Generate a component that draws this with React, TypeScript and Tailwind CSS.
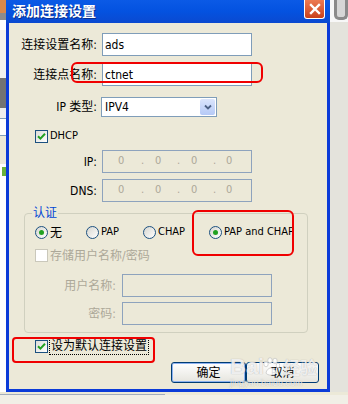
import React from 'react';

const UI = "font-['DejaVu_Sans_Condensed','Liberation_Sans','Noto_Sans_CJK_SC',sans-serif]";

function Check({ checked, disabled }: { checked?: boolean; disabled?: boolean }) {
  return (
    <span
      className={
        disabled
          ? 'flex h-[13px] w-[13px] shrink-0 items-center justify-center border border-[#cac8bb] bg-white'
          : 'flex h-[13px] w-[13px] shrink-0 items-center justify-center border border-[#1c5180] bg-linear-to-br from-[#dcdcd7] to-white'
      }
    >
      {checked && (
        <svg width="9" height="9" viewBox="0 0 9 9">
          <path d="M1 4.2 L3.4 6.6 L8 1.8" stroke="#21a121" strokeWidth="2" fill="none" />
        </svg>
      )}
    </span>
  );
}

function Radio({ checked }: { checked?: boolean }) {
  return (
    <span className="flex h-[13px] w-[13px] shrink-0 items-center justify-center rounded-full border border-[#1c5180] bg-linear-to-br from-[#d6d6d0] to-white">
      {checked && <span className="h-[5px] w-[5px] rounded-full bg-[#21a121]" />}
    </span>
  );
}

function Field({ value, disabled, ip }: { value?: string; disabled?: boolean; ip?: boolean }) {
  return (
    <div
      className={
        disabled
          ? 'flex h-[23px] w-[150px] items-center border border-[#8ea3bd] bg-[#ece9d8]'
          : 'flex h-[23px] w-[150px] items-center border border-[#7f9db9] bg-white pl-[2px]'
      }
    >
      {value && <span className="text-[12px] text-black">{value}</span>}
      {ip && (
        <div className="flex items-center text-[11px] text-[#aca899]">
          <span className="ml-[15px] w-[6px] text-center">0</span>
          <span className="ml-[17px] w-[3px] text-center">.</span>
          <span className="ml-[11px] w-[6px] text-center">0</span>
          <span className="ml-[16px] w-[3px] text-center">.</span>
          <span className="ml-[11px] w-[6px] text-center">0</span>
          <span className="ml-[16px] w-[3px] text-center">.</span>
          <span className="ml-[10px] w-[6px] text-center">0</span>
        </div>
      )}
    </div>
  );
}

function Row({ label, children, mt }: { label: string; children: React.ReactNode; mt: string }) {
  return (
    <div className={`flex h-[23px] items-center ${mt}`}>
      <span className="w-[88px] text-right text-[12px] text-black">{label}</span>
      <div className="ml-[5px]">{children}</div>
    </div>
  );
}

function XpButton({ label, primary, w }: { label: string; primary?: boolean; w: string }) {
  return (
    <div
      className={`flex h-[21px] ${w} items-center justify-center rounded-[3px] border border-[#003c74] bg-linear-to-b from-white to-[#e6e5de] text-[12px] text-black ${
        primary ? 'shadow-[inset_0_0_0_1px_#8db2f0]' : ''
      }`}
    >
      {label}
    </div>
  );
}

export default function App() {
  return (
    <div className={`relative h-[404px] w-[348px] overflow-hidden bg-[#ece9d8] ${UI}`}>
      <div className="flex h-[392px]">
        {/* background app, left */}
        <div className="flex w-[6px] flex-col">
          <div className="h-[13px] bg-[#d9894a]" />
          <div className="h-[7px] bg-[#8c8c8c]" />
          <div className="h-[10px] bg-white" />
          <div className="h-[48px] bg-[#f3f2ee]" />
          <div className="h-[30px] bg-[#737373]" />
          <div className="h-[10px] bg-[#eeeeee]" />
          <div className="h-[18px] border-y border-[#7f9db9] bg-white" />
          <div className="h-[28px] bg-[#ece9d8]" />
          <div className="h-[16px] bg-white">
            <div className="mt-[3px] ml-[2px] h-[9px] w-[4px] bg-[#6bb33a]" />
          </div>
          <div className="flex-1 bg-white" />
        </div>

        {/* dialog */}
        <div className="flex w-[324px] flex-col">
          <div className="flex h-[23px] items-start justify-between bg-linear-to-b from-[#0b5ae6] via-[#0452e0] to-[#0a49d0] pl-[6px] pr-[5px]">
            <span className="font-['Noto_Sans_CJK_SC',sans-serif] text-[14px] leading-[20px] font-bold text-white [text-shadow:1px_1px_0_#0a2d8a]">
              添加连接设置
            </span>
            <div className="flex h-[19px] w-[21px] items-center justify-center rounded-b-[3px] border border-t-0 border-white bg-linear-to-b from-[#ec7a52] to-[#c9401a]">
              <svg width="12" height="12" viewBox="0 0 12 12">
                <path d="M2 2 L10 10 M10 2 L2 10" stroke="white" strokeWidth="2.4" strokeLinecap="square" />
              </svg>
            </div>
          </div>

          <div className="flex flex-1 flex-col border-x-[3px] border-b-[3px] border-[#0b3bd8] bg-[#ece9d8]">
            <Row label="连接设置名称:" mt="mt-[10px]">
              <Field value="ads" />
            </Row>
            <Row label="连接点名称:" mt="mt-[7px]">
              <Field value="ctnet" />
            </Row>

            <div className="mt-[11px] flex h-[20px] items-center">
              <span className="w-[88px] text-right text-[12px] text-black">IP 类型:</span>
              <div className="ml-[4px] flex h-[20px] w-[116px] items-center justify-between border border-[#7f9db9] bg-white pl-[3px] pr-[1px]">
                <span className="text-[12px]">IPV4</span>
                <div className="flex h-[16px] w-[15px] items-center justify-center rounded-[2px] bg-linear-to-b from-[#dbe5fc] to-[#b5c9f6]">
                  <svg width="8" height="6" viewBox="0 0 8 6">
                    <path d="M1 1.5 L4 4.5 L7 1.5" stroke="#4d6185" strokeWidth="1.8" fill="none" />
                  </svg>
                </div>
              </div>
            </div>

            <div className="mt-[13px] ml-[26px] flex h-[13px] items-center">
              <Check checked />
              <span className="ml-[2px] text-[11px] text-black">DHCP</span>
            </div>

            <Row label="IP:" mt="mt-[7px]">
              <Field disabled ip />
            </Row>
            <Row label="DNS:" mt="mt-[6px]">
              <Field disabled ip />
            </Row>

            {/* 认证 group */}
            <div className="mt-[11px] ml-[15px] flex h-[120px] w-[284px] flex-col rounded-[4px] border border-[#d0d0bf]">
              <span className="-mt-[8px] ml-[7px] self-start bg-[#ece9d8] px-[1px] text-[12px] leading-[14px] text-[#0046d5]">认证</span>
              <div className="mt-[6px] flex h-[13px] items-center pl-[10px]">
                <div className="flex w-[51px] items-center">
                  <Radio checked />
                  <span className="ml-[2px] text-[12px]">无</span>
                </div>
                <div className="flex w-[57px] items-center">
                  <Radio />
                  <span className="ml-[2px] text-[11px]">PAP</span>
                </div>
                <div className="flex w-[66px] items-center">
                  <Radio />
                  <span className="ml-[2px] text-[11px]">CHAP</span>
                </div>
                <div className="flex items-center">
                  <Radio checked />
                  <span className="ml-[2px] text-[11px] whitespace-nowrap">PAP and CHAP</span>
                </div>
              </div>
              <div className="mt-[10px] flex h-[13px] items-center pl-[10px]">
                <Check disabled />
                <span className="ml-[2px] text-[12px] text-[#aca899]">存储用户名称/密码</span>
              </div>
              <div className="mt-[12px] flex h-[23px] items-center">
                <span className="w-[91px] text-right text-[12px] text-[#aca899]">用户名称:</span>
                <div className="ml-[6px]">
                  <Field disabled />
                </div>
              </div>
              <div className="mt-[5px] flex h-[23px] items-center">
                <span className="w-[91px] text-right text-[12px] text-[#aca899]">密码:</span>
                <div className="ml-[6px]">
                  <Field disabled />
                </div>
              </div>
            </div>

            <div className="mt-[7px] ml-[26px] flex h-[13px] items-center">
              <Check checked />
              <span className="ml-[1px] border border-dotted border-black px-[1px] text-[12px] leading-[15px]">设为默认连接设置</span>
            </div>

            <div className="mt-[9px] flex justify-end pr-[8px]">
              <XpButton label="确定" primary w="w-[75px]" />
              <XpButton label="取消" w="w-[73px]" />
            </div>
          </div>
        </div>

        {/* background app, right */}
        <div className="flex w-[18px] flex-col">
          <div className="flex h-[22px] items-start bg-[#f7f7f7] pl-[4px]">
            <div className="h-[20px] w-[14px] rounded-b-[5px] border-[3px] border-t-0 border-[#8a8a8a] bg-[#d6d6d6]" />
          </div>
          <div className="flex-1 bg-[#e4e3dc]" />
        </div>
      </div>

      {/* bottom strip */}
      <div className="flex h-[12px] flex-col">
        <div className="h-[2px] bg-[#ece9d8]" />
        <div className="h-[1px] w-[165px] bg-[#a3adbd]" />
        <div className="flex-1 bg-[#f1efe6]" />
      </div>

      {/* baidu watermark */}
      <div className="pointer-events-none absolute top-[355px] left-[230px] flex flex-col items-start text-white/80 [text-shadow:0_0_1px_rgba(110,110,110,0.6)]">
        <div className="flex items-center font-['Liberation_Sans',sans-serif]">
          <span className="text-[22px] leading-[24px] font-bold">Bai</span>
          <svg width="18" height="20" viewBox="0 0 18 20" className="-ml-[2px]">
            <g fill="white" fillOpacity="0.85" stroke="#b9b9b9" strokeWidth="0.6">
              <ellipse cx="4" cy="7" rx="2.2" ry="2.8" />
              <ellipse cx="8" cy="3.5" rx="2.2" ry="2.8" />
              <ellipse cx="13" cy="4" rx="2.2" ry="2.8" />
              <ellipse cx="16" cy="8.5" rx="1.8" ry="2.5" />
              <path d="M4 16 C5 10 12 9 14 15 C15 19 5 19 4 16 Z" />
            </g>
          </svg>
          <span className="ml-[3px] font-['Noto_Sans_CJK_SC',sans-serif] text-[17px] leading-[24px] font-bold">经验</span>
        </div>
        <span className="-mt-[1px] font-['Liberation_Sans',sans-serif] text-[9px] leading-[10px]">jingyan.baidu.com</span>
      </div>

      {/* red annotations */}
      <div className="pointer-events-none absolute top-[62px] left-[71px] h-[21px] w-[192px] rounded-[6px] border-2 border-[#f00000]" />
      <div className="pointer-events-none absolute top-[210px] left-[192px] h-[46px] w-[102px] rounded-[6px] border-2 border-[#f00000]" />
      <div className="pointer-events-none absolute top-[337px] left-[12px] h-[26px] w-[143px] rounded-[4px] border-2 border-[#f00000]" />
    </div>
  );
}
